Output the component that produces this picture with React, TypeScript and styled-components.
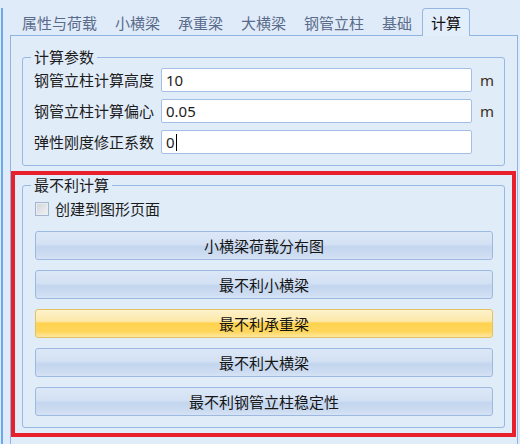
import React, {FC} from 'react';
import styled, {createGlobalStyle, css} from 'styled-components';

const GlobalStyle = createGlobalStyle`
  html, body {
    margin: 0;
    padding: 0;
    background: #e0ebf9;
  }
  body {
    font-family: "Noto Sans CJK SC", "Noto Sans", sans-serif;
    font-size: 15px;
    color: #1c1c1c;
  }
`;

const Window = styled.div`
  width: 520px;
  height: 444px;
  box-sizing: border-box;
  background: #e0ebf9;
  padding-top: 8px;
  overflow: hidden;
`;

const Frame = styled.div`
  margin-left: 1px;
  border-left: 2px solid #6aa9ec;
  height: 436px;
  padding-left: 7px;
  display: flex;
  flex-direction: column;
`;

const TabBar = styled.div`
  display: flex;
  align-items: flex-end;
  height: 27px;
  padding-left: 3px;
`;

const Tab = styled.div<{ $active?: boolean }>`
  height: 27px;
  box-sizing: border-box;
  padding: 0 8px;
  border: 1px solid transparent;
  border-bottom: none;
  line-height: 28px;
  color: #5a6b8b;
  white-space: nowrap;
  ${p => p.$active && css`
    margin-left: 1px;
    color: #111;
    background: #e3eefb;
    border-color: #96b7e4;
    border-radius: 4px 4px 0 0;
    height: 28px;
    margin-bottom: -1px;
    position: relative;
  `}
`;

const Panel = styled.div`
  width: 508px;
  box-sizing: border-box;
  flex: 1;
  border: 1px solid #8fb3e3;
  border-bottom: none;
  background: #e1ecf9;
  padding-top: 13px;
`;

const Group = styled.fieldset<{ $pb: number }>`
  margin: 0;
  border: 1px solid #97b7e4;
  border-radius: 3px;
  padding: 0 11px ${p => p.$pb}px 11px;
  min-width: 0;
`;

const Legend = styled.legend`
  margin-left: -3px;
  padding: 0 3px;
  line-height: 16px;
  font-size: 15px;
`;

const ParamsWrap = styled.div`
  margin: 0 12px 0 11px;
`;

const FieldGrid = styled.div`
  display: grid;
  grid-template-columns: 127px 311px 1fr;
  row-gap: 7px;
  padding-top: 3px;
  align-items: center;
`;

const Label = styled.div`
  white-space: nowrap;
  line-height: 24px;
`;

const Field = styled.div`
  height: 24px;
  box-sizing: border-box;
  border: 1px solid #a3bfe6;
  border-radius: 2px;
  background: #fff;
  padding-left: 4px;
  line-height: 22px;
  font-family: "Noto Sans", "Noto Sans CJK SC", sans-serif;
  font-size: 15px;
  display: flex;
  align-items: center;
`;

const Caret = styled.span`
  display: inline-block;
  width: 1px;
  height: 17px;
  background: #000;
  margin-left: 1px;
`;

const Unit = styled.div`
  padding-left: 8px;
  font-family: "Noto Sans", sans-serif;
  color: #3a3020;
`;

const Highlight = styled.div`
  margin: 5px 1px 0 0;
  border: 4px solid #e8202c;
  padding: 2px 7px 5px 7px;
`;

const CheckRow = styled.label`
  display: flex;
  align-items: center;
  gap: 6px;
  margin-top: 7px;
  height: 17px;
  padding-left: 1px;
`;

const CheckBox = styled.span`
  width: 14px;
  height: 14px;
  box-sizing: border-box;
  border: 1px solid #a4b5cd;
  background: linear-gradient(135deg, #cfd3d9, #f2f3f5);
  box-shadow: inset 0 0 0 1px #e9ecf0;
`;

const ButtonList = styled.div`
  display: flex;
  flex-direction: column;
  gap: 10px;
  margin-top: 14px;
  padding-left: 1px;
`;

const Button = styled.button<{ $hot?: boolean }>`
  height: 29px;
  box-sizing: border-box;
  border: 1px solid #9db9e2;
  border-radius: 3px;
  font-family: inherit;
  font-size: 15px;
  color: #161616;
  padding: 0;
  background: linear-gradient(to bottom, #dce8f7 0%, #d3e1f4 45%, #c3d6ee 55%, #cddcf1 85%, #d6e3f5 100%);
  ${p => p.$hot && css`
    border-color: #e3c066;
    background: linear-gradient(to bottom, #fdf2cb 0%, #fde8a8 42%, #ffd34f 48%, #ffd65c 80%, #fee7a1 100%);
  `}
`;

const tabs = ['属性与荷载', '小横梁', '承重梁', '大横梁', '钢管立柱', '基础', '计算'];

const params = [
  {label: '钢管立柱计算高度', value: '10', unit: 'm'},
  {label: '钢管立柱计算偏心', value: '0.05', unit: 'm'},
  {label: '弹性刚度修正系数', value: '0', unit: '', caret: true},
];

const actions = ['小横梁荷载分布图', '最不利小横梁', '最不利承重梁', '最不利大横梁', '最不利钢管立柱稳定性'];

const App: FC = () => {
  return (
    <Window>
      <GlobalStyle/>
      <Frame>
        <TabBar>
          {tabs.map(t => (
            <Tab key={t} $active={t === '计算'}>{t}</Tab>
          ))}
        </TabBar>
        <Panel>
          <ParamsWrap>
            <Group $pb={11}>
              <Legend>计算参数</Legend>
              <FieldGrid>
                {params.map(p => (
                  <React.Fragment key={p.label}>
                    <Label>{p.label}</Label>
                    <Field>
                      {p.value}
                      {p.caret && <Caret/>}
                    </Field>
                    <Unit>{p.unit}</Unit>
                  </React.Fragment>
                ))}
              </FieldGrid>
            </Group>
          </ParamsWrap>
          <Highlight>
            <Group $pb={11}>
              <Legend>最不利计算</Legend>
              <CheckRow>
                <CheckBox/>
                创建到图形页面
              </CheckRow>
              <ButtonList>
                {actions.map(a => (
                  <Button key={a} $hot={a === '最不利承重梁'}>{a}</Button>
                ))}
              </ButtonList>
            </Group>
          </Highlight>
        </Panel>
      </Frame>
    </Window>
  );
};

export default App;
